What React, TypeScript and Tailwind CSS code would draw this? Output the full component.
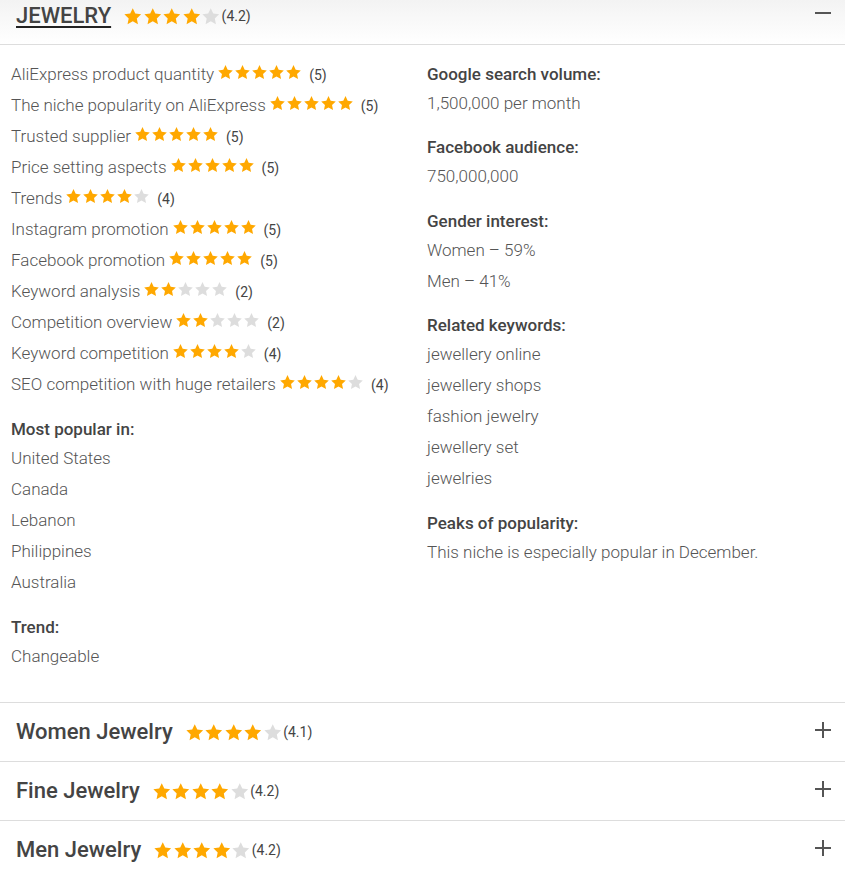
import React from "react";

const STAR = "M12 1.5l3.1 6.6 7.2.9-5.3 5 1.4 7.1L12 17.6l-6.4 3.5L7 14 1.7 9l7.2-.9L12 1.5z";

function Stars({ n, size }: { n: number; size: number }) {
  return (
    <span className="inline-flex items-center">
      {[0, 1, 2, 3, 4].map((i) => (
        <svg key={i} width={size} height={size} viewBox="0 0 24 24" className="shrink-0">
          <path d={STAR} fill={i < n ? "#ffa800" : "#dddddd"} />
        </svg>
      ))}
    </span>
  );
}

const ratings: [string, number][] = [
  ["AliExpress product quantity", 5],
  ["The niche popularity on AliExpress", 5],
  ["Trusted supplier", 5],
  ["Price setting aspects", 5],
  ["Trends", 4],
  ["Instagram promotion", 5],
  ["Facebook promotion", 5],
  ["Keyword analysis", 2],
  ["Competition overview", 2],
  ["Keyword competition", 4],
  ["SEO competition with huge retailers", 4],
];

function Section({ title, items }: { title: string; items: string[] }) {
  return (
    <div className="mt-[14.5px] first:mt-0">
      <div className="h-[28px] leading-[28px] font-medium text-[#444]">{title}</div>
      {items.map((t) => (
        <div key={t} className="h-[31px] leading-[31px] font-light text-[#555]">
          {t}
        </div>
      ))}
    </div>
  );
}

function Collapsed({ title, rating }: { title: string; rating: string }) {
  return (
    <div className="h-[59px] border-t border-[#ddd] flex items-center pl-4 pr-[14px]">
      <span className="text-[22px] font-medium text-[#444] leading-none">{title}</span>
      <span className="ml-3 mt-[2px] inline-flex items-center">
        <Stars n={4} size={19.5} />
        <span className="text-[14px] text-[#444] font-normal ml-[1px]">({rating})</span>
      </span>
      <span className="ml-auto relative w-[16px] h-[16px] mt-[-3px]">
        <span className="absolute left-0 top-[7px] w-[16px] h-[2px] bg-[#555]" />
        <span className="absolute top-0 left-[7px] w-[2px] h-[16px] bg-[#555]" />
      </span>
    </div>
  );
}

export default function App() {
  return (
    <div className="w-[845px] bg-white" style={{ fontFamily: "Roboto, 'Liberation Sans', sans-serif" }}>
      <div className="h-[45px] border-b border-[#ddd] bg-gradient-to-b from-[#f3f3f3] to-white flex items-start pl-4 pr-[14px]">
        <span className="text-[22px] font-medium text-[#444] leading-none mt-[5px] underline decoration-[#222] decoration-2 underline-offset-[3px]">
          JEWELRY
        </span>
        <span className="ml-3 mt-[6px] inline-flex items-center">
          <Stars n={4} size={19.5} />
          <span className="text-[14px] text-[#444] ml-[1px]">(4.2)</span>
        </span>
        <span className="ml-auto mt-[12px] w-[16px] h-[2px] bg-[#555]" />
      </div>
      <div className="grid grid-cols-[416px_1fr] pl-[11px] pt-[14.5px] pb-[30px] text-[17px]">
        <div>
          {ratings.map(([t, n]) => (
            <div key={t} className="h-[31px] flex items-center font-light text-[#555]">
              <span>{t}</span>
              <span className="ml-[3px] mt-[1px]">
                <Stars n={n} size={17} />
              </span>
              <span className="ml-[7px] text-[14px] font-normal text-[#444]">({n})</span>
            </div>
          ))}
          <div className="mt-[14.5px]">
            <Section title="Most popular in:" items={["United States", "Canada", "Lebanon", "Philippines", "Australia"]} />
            <Section title="Trend:" items={["Changeable"]} />
          </div>
        </div>
        <div>
          <Section title="Google search volume:" items={["1,500,000 per month"]} />
          <Section title="Facebook audience:" items={["750,000,000"]} />
          <Section title="Gender interest:" items={["Women – 59%", "Men – 41%"]} />
          <Section
            title="Related keywords:"
            items={["jewellery online", "jewellery shops", "fashion jewelry", "jewellery set", "jewelries"]}
          />
          <Section title="Peaks of popularity:" items={["This niche is especially popular in December."]} />
        </div>
      </div>
      <Collapsed title="Women Jewelry" rating="4.1" />
      <Collapsed title="Fine Jewelry" rating="4.2" />
      <Collapsed title="Men Jewelry" rating="4.2" />
    </div>
  );
}
